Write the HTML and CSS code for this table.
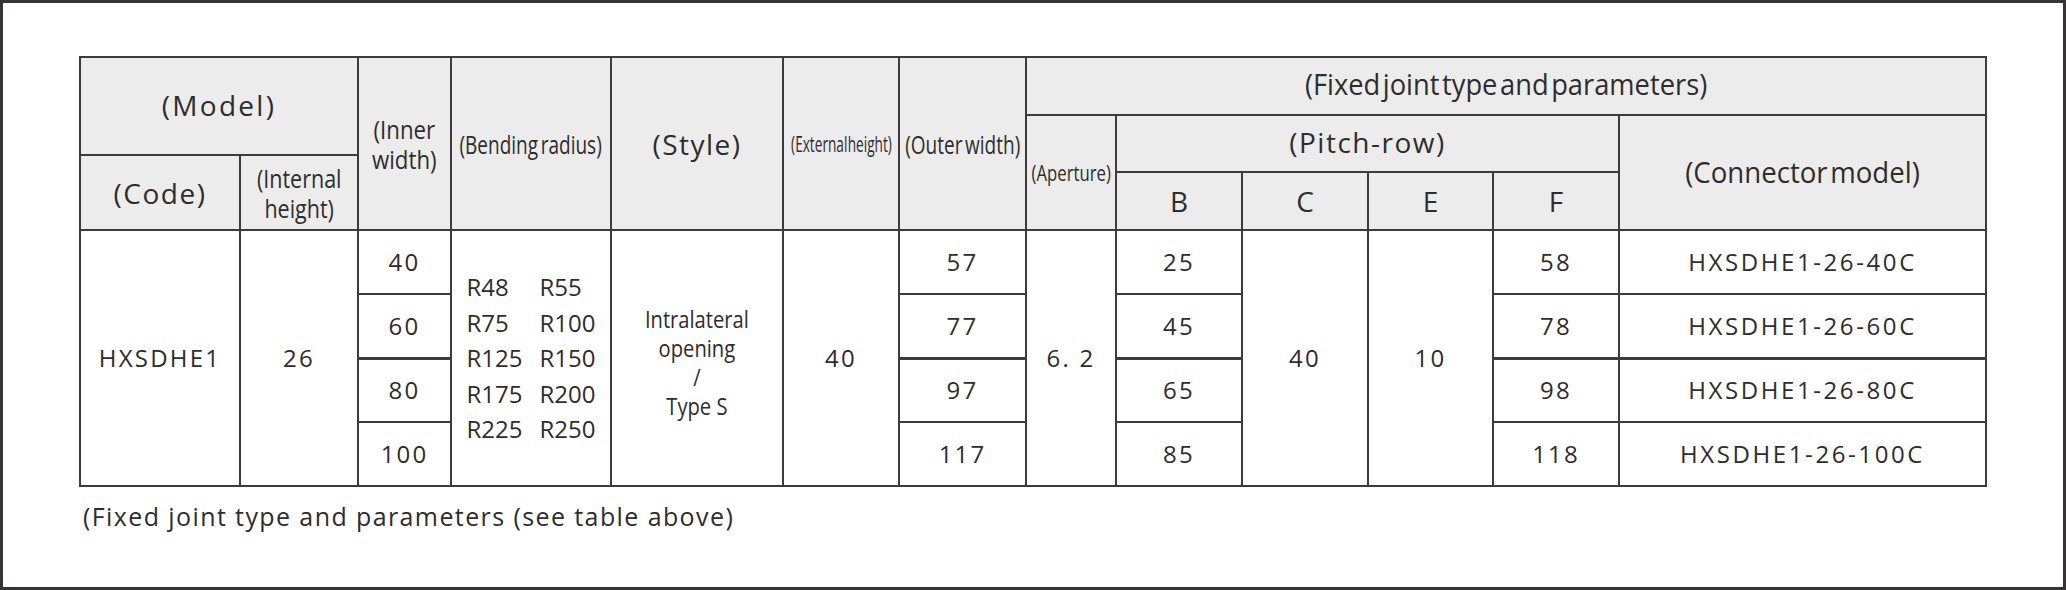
FILE: index.html
```html
<!DOCTYPE html>
<html lang="en">
<head>
<meta charset="utf-8">
<title>HXSDHE1 specification</title>
<link rel="stylesheet" href="styles.css">
</head>
<body>
<div class="frame">
  <table class="spec">
    <colgroup>
      <col class="w160"><col class="w118"><col class="w93"><col class="w160"><col class="w172"><col class="w116"><col class="w127">
      <col class="w90"><col class="w126"><col class="w126"><col class="w125"><col class="w126"><col class="w367">
    </colgroup>
    <thead>
      <tr class="h1">
        <th colspan="2" rowspan="2" class="wide sp2 up2">(Model)</th>
        <th rowspan="4"><div class="cw"><span class="cn cn-inner">(Inner<br>width)</span></div></th>
        <th rowspan="4"><div class="cw"><span class="cn cn-bend">(Bending radius)</span></div></th>
        <th rowspan="4" class="wide">(Style)</th>
        <th rowspan="4"><div class="cw"><span class="cn cn-ext">(External height)</span></div></th>
        <th rowspan="4"><div class="cw"><span class="cn cn-outer">(Outer width)</span></div></th>
        <th colspan="7" class="up5"><div class="cw"><span class="cn cn-fixed">(Fixed joint type and parameters)</span></div></th>
      </tr>
      <tr class="h2">
        <th rowspan="3" class="up2"><div class="cw"><span class="cn cn-ap">(Aperture)</span></div></th>
        <th colspan="4" rowspan="2" class="wide up4">(Pitch-row)</th>
        <th rowspan="3" class="up2"><div class="cw"><span class="cn cn-conn">(Connector model)</span></div></th>
      </tr>
      <tr class="h3">
        <th rowspan="2" class="wide">(Code)</th>
        <th rowspan="2"><div class="cw"><span class="cn cn-int">(Internal<br>height)</span></div></th>
      </tr>
      <tr class="h4">
        <th class="letter">B</th><th class="letter">C</th><th class="letter">E</th><th class="letter">F</th>
      </tr>
    </thead>
    <tbody>
      <tr>
        <td rowspan="4">HXSDHE1</td>
        <td rowspan="4">26</td>
        <td>40</td>
        <td rowspan="4">
          <div class="radii">
            <span>R48</span><span>R55</span>
            <span>R75</span><span>R100</span>
            <span>R125</span><span>R150</span>
            <span>R175</span><span>R200</span>
            <span>R225</span><span>R250</span>
          </div>
        </td>
        <td rowspan="4" class="down8"><div class="cw"><span class="cn cn-style">Intralateral<br>opening<br><span class="slash">/</span><br>Type S</span></div></td>
        <td rowspan="4">40</td>
        <td>57</td>
        <td rowspan="4">6. 2</td>
        <td>25</td>
        <td rowspan="4">40</td>
        <td rowspan="4">10</td>
        <td>58</td>
        <td class="model">HXSDHE1-26-40C</td>
      </tr>
      <tr>
        <td>60</td><td>77</td><td>45</td><td>78</td><td class="model">HXSDHE1-26-60C</td>
      </tr>
      <tr class="mid">
        <td>80</td><td>97</td><td>65</td><td>98</td><td class="model">HXSDHE1-26-80C</td>
      </tr>
      <tr>
        <td>100</td><td>117</td><td>85</td><td>118</td><td class="model">HXSDHE1-26-100C</td>
      </tr>
    </tbody>
  </table>
  <p class="note">(Fixed joint type and parameters (see table above)</p>
</div>
</body>
</html>
```

FILE: styles.css
```css
html, body {
  margin: 0;
  padding: 0;
  background: #ffffff;
}

.frame {
  width: 2066px;
  height: 590px;
  box-sizing: border-box;
  border: 3px solid #363434;
  padding: 53px 0 0 76px;
  font-family: "Open Sans", "Noto Sans", sans-serif;
  color: #2f2c2c;
}

.spec {
  border-collapse: collapse;
  table-layout: fixed;
  width: 1908px;
}

.w160 { width: 160px; }
.w118 { width: 118px; }
.w93 { width: 93px; }
.w172 { width: 172px; }
.w116 { width: 116px; }
.w127 { width: 127px; }
.w90 { width: 90px; }
.w126 { width: 126px; }
.w125 { width: 125px; }
.w367 { width: 367px; }

.spec th,
.spec td {
  border: 2px solid #3d3b3b;
  padding: 0;
  text-align: center;
  vertical-align: middle;
  white-space: nowrap;
  overflow: visible;
}

.spec th {
  background: #ececec;
  font-weight: 400;
  font-size: 28px;
  line-height: 30px;
}

.h1 { height: 58px; }
.h2 { height: 40px; }
.h3 { height: 17px; }
.h4 { height: 58px; }

.spec .up2 { padding-bottom: 2px; }
.spec .up4 { padding-bottom: 4px; }
.spec .up5 { padding-bottom: 5px; }
.spec .down8 { padding-top: 8px; }

.wide { letter-spacing: 1.5px; }
.sp2 { letter-spacing: 2.3px; }

.letter { font-size: 28px; }

.cw {
  display: flex;
  justify-content: center;
  align-items: center;
}

.cn {
  display: inline-block;
  white-space: nowrap;
  transform-origin: 50% 50%;
}

.cn-inner { font-size: 25px; line-height: 30px; transform: scaleX(0.89); }
.cn-int { font-size: 25px; line-height: 30px; transform: scaleX(0.86); }
.cn-bend { font-size: 25px; word-spacing: -3px; transform: scaleX(0.76); }
.cn-ext { font-size: 21px; word-spacing: -5px; transform: scaleX(0.65); }
.cn-outer { font-size: 25px; word-spacing: -3px; transform: scaleX(0.76); }
.cn-fixed { font-size: 30px; word-spacing: -5px; transform: scaleX(0.91); }
.cn-ap { font-size: 22px; transform: scaleX(0.76); }
.cn-conn { font-size: 30px; word-spacing: -5px; transform: scaleX(0.92); }

.spec tbody tr { height: 64px; }

.spec td {
  font-size: 24px;
  letter-spacing: 2.2px;
  line-height: 30px;
}

.spec td.model { letter-spacing: 2.6px; }

.spec tr.mid td { border-top-width: 3px; }

.radii {
  display: inline-grid;
  grid-template-columns: 73px auto;
  grid-auto-rows: 35.5px;
  align-items: center;
  text-align: left;
  letter-spacing: 0;
  font-size: 24px;
}

.cn-style {
  font-size: 24px;
  letter-spacing: 0;
  line-height: 29px;
  transform: scaleX(0.84);
}

.slash {
  display: inline-block;
  line-height: 24px;
}

.note {
  margin: 13px 0 0 4px;
  font-size: 25px;
  line-height: 32px;
  letter-spacing: 1.4px;
}
```
